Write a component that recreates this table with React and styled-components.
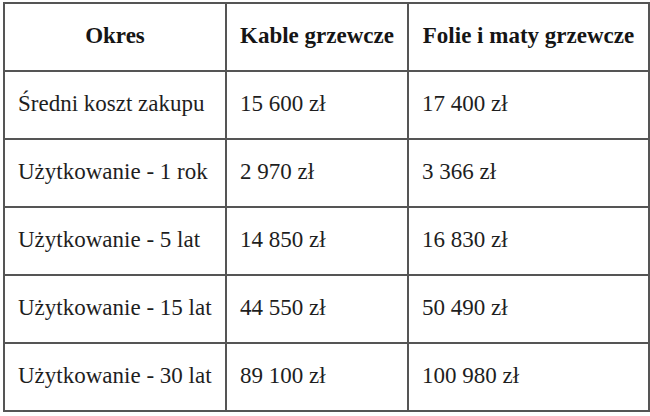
import React from "react";
import styled, { createGlobalStyle } from "styled-components";

const GlobalStyle = createGlobalStyle`
  html, body {
    margin: 0;
    padding: 0;
    background: #ffffff;
  }
  body {
    font-family: "Liberation Serif", "Times New Roman", serif;
    color: #1e1e1e;
  }
`;

const Page = styled.div`
  padding: 2px 0 0 3px;
`;

const Table = styled.table`
  border-collapse: collapse;
  table-layout: fixed;
  width: 645px;
  border: 2px solid #555;
  font-family: "Liberation Serif", "Times New Roman", serif;
`;

const Col = styled.col`
  width: ${props => props.$w}px;
`;

const HeadCell = styled.th`
  border: 2px solid #555;
  height: 68px;
  box-sizing: border-box;
  padding: 0 4px 2px;
  font-family: "Liberation Serif", "Times New Roman", serif;
  font-size: 23px;
  font-weight: bold;
  text-align: center;
  color: #151515;
  white-space: nowrap;
`;

const Cell = styled.td`
  border: 2px solid #555;
  height: 68px;
  box-sizing: border-box;
  padding: 0 0 2px 13px;
  font-family: "Liberation Serif", "Times New Roman", serif;
  font-size: 23px;
  text-align: left;
  white-space: nowrap;
  color: #1e1e1e;
`;

const headers = ["Okres", "Kable grzewcze", "Folie i maty grzewcze"];

const rows = [
  ["Średni koszt zakupu", "15 600 zł", "17 400 zł"],
  ["Użytkowanie - 1 rok", "2 970 zł", "3 366 zł"],
  ["Użytkowanie - 5 lat", "14 850 zł", "16 830 zł"],
  ["Użytkowanie - 15 lat", "44 550 zł", "50 490 zł"],
  ["Użytkowanie - 30 lat", "89 100 zł", "100 980 zł"]
];

const App = function() {
  return (
    <Page>
      <GlobalStyle />
      <Table>
        <colgroup>
          <Col $w={222} />
          <Col $w={182} />
          <Col $w={241} />
        </colgroup>
        <thead>
          <tr>
            {headers.map(h => (
              <HeadCell key={h}>{h}</HeadCell>
            ))}
          </tr>
        </thead>
        <tbody>
          {rows.map(row => (
            <tr key={row[0]}>
              {row.map((value, i) => (
                <Cell key={i}>{value}</Cell>
              ))}
            </tr>
          ))}
        </tbody>
      </Table>
    </Page>
  );
};

export default App;
